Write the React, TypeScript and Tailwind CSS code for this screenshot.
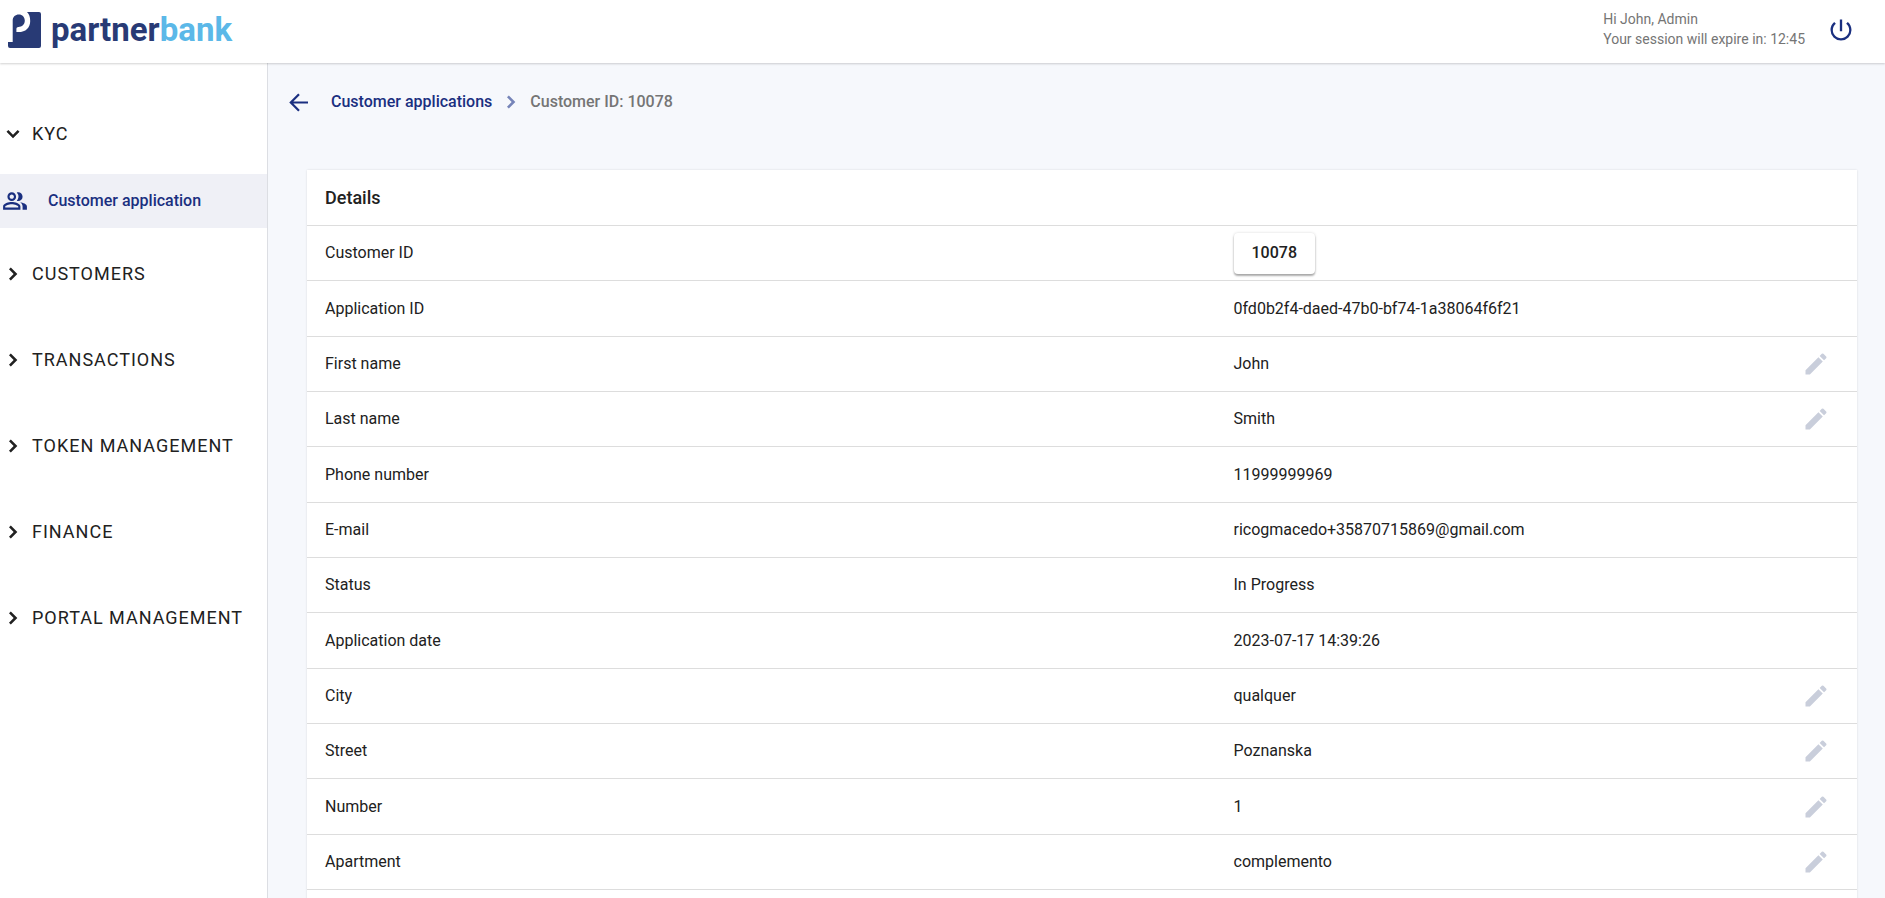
import { useState } from "react";

interface DetailRow {
  label: string;
  value: string;
  editable?: boolean;
  linked?: boolean;
}

const DETAILS: DetailRow[] = [
  { label: "Customer ID", value: "10078", linked: true },
  { label: "Application ID", value: "0fd0b2f4-daed-47b0-bf74-1a38064f6f21" },
  { label: "First name", value: "John", editable: true },
  { label: "Last name", value: "Smith", editable: true },
  { label: "Phone number", value: "11999999969" },
  { label: "E-mail", value: "ricogmacedo+35870715869@gmail.com" },
  { label: "Status", value: "In Progress" },
  { label: "Application date", value: "2023-07-17 14:39:26" },
  { label: "City", value: "qualquer", editable: true },
  { label: "Street", value: "Poznanska", editable: true },
  { label: "Number", value: "1", editable: true },
  { label: "Apartment", value: "complemento", editable: true },
];

const SECTIONS = ["KYC", "CUSTOMERS", "TRANSACTIONS", "TOKEN MANAGEMENT", "FINANCE", "PORTAL MANAGEMENT"];

export default function App() {
  return (
    <div className="flex h-screen flex-col overflow-hidden bg-white font-['Roboto',sans-serif] text-base text-[#212121]">
      <Header />
      <div className="flex min-h-0 flex-1">
        <Sidebar />
        <main className="min-w-0 flex-1 overflow-hidden bg-[#f6f8fc] pr-7 pl-[39px]">
          <Breadcrumbs />
          <DetailsCard />
        </main>
      </div>
    </div>
  );
}

function Header() {
  return (
    <header className="z-10 flex h-[63px] shrink-0 items-center justify-between bg-white pr-[30px] pb-1 pl-2 shadow-[0_1px_2px_rgba(0,0,0,0.18)]">
      <a href="#" aria-label="partnerbank" className="flex items-center gap-[10px]">
        <LogoMark className="h-9 w-[33px]" />
        <span className="text-[33px] leading-10 font-bold text-[#283a75]">
          partner<span className="text-[#5bb8e8]">bank</span>
        </span>
      </a>

      <div className="flex items-center gap-[22px]">
        <div className="pb-[2px] text-sm leading-5 text-[#757575]">
          <p>Hi John, Admin</p>
          <p>Your session will expire in: 12:45</p>
        </div>
        <button aria-label="Log out" className="text-[#1a2f80]">
          <PowerIcon className="h-7 w-7" />
        </button>
      </div>
    </header>
  );
}

function Sidebar() {
  const [open, setOpen] = useState("KYC");

  return (
    <nav className="flex w-[268px] shrink-0 flex-col gap-[5px] border-r border-[#dcdee3] pt-[30px]">
      {SECTIONS.map((name) => (
        <div key={name}>
          <button
            onClick={() => setOpen(open === name ? "" : name)}
            className="flex h-[81px] w-full items-center text-left text-lg tracking-[1px]"
          >
            <ChevronIcon className={open === name ? "h-[26px] w-[26px] rotate-90" : "h-[26px] w-[26px]"} />
            <span className="pl-[6px]">{name}</span>
          </button>
          {name === "KYC" && open === "KYC" && (
            <a
              href="#"
              className="flex h-[54px] items-center gap-5 bg-[#eff0f6] pl-[2px] font-medium text-[#1a2f80]"
            >
              <PeopleIcon className="h-[26px] w-[26px]" />
              Customer application
            </a>
          )}
        </div>
      ))}
    </nav>
  );
}

function Breadcrumbs() {
  return (
    <div className="-ml-5 flex h-[107px] items-center pb-[29px] font-medium">
      <button aria-label="Back" className="mr-5 text-[#1a2f80]">
        <BackIcon className="h-6 w-6" />
      </button>
      <a href="#" className="text-[#1a2f80]">
        Customer applications
      </a>
      <ChevronIcon className="mx-[6px] h-[26px] w-[26px] text-[#7684b8]" />
      <span className="text-[#757575]">Customer ID: 10078</span>
    </div>
  );
}

function DetailsCard() {
  return (
    <section className="bg-white pb-14 shadow-[0_0_2px_rgba(0,0,0,0.12)]">
      <h2 className="flex h-[55px] items-center px-[18px] text-lg font-medium">Details</h2>
      <table className="w-full table-fixed">
        <tbody>
          {DETAILS.map((row) => (
            <tr key={row.label} className="h-[55px] border-y border-[#dddddd] nth-[3n+2]:h-14">
              <th scope="row" className="w-[59%] px-[18px] text-left font-normal">
                {row.label}
              </th>
              <td className="pl-3">
                {row.linked ? (
                  <button className="h-[41px] rounded bg-white px-[18px] font-medium shadow-[0_2px_2px_rgba(0,0,0,0.3),0_0_3px_rgba(0,0,0,0.15)]">
                    {row.value}
                  </button>
                ) : (
                  row.value
                )}
              </td>
              <td className="w-[55px]">
                {row.editable && (
                  <button aria-label={`Edit ${row.label}`} className="block text-[#c9cedb]">
                    <PencilIcon className="h-7 w-7" />
                  </button>
                )}
              </td>
            </tr>
          ))}
        </tbody>
      </table>
    </section>
  );
}

function LogoMark({ className }: { className?: string }) {
  return (
    <svg className={className} viewBox="0 0 33 36">
      <path
        fill="#283a75"
        d="M19 0H31a2 2 0 0 1 2 2V34a2 2 0 0 1-2 2H2a2 2 0 0 1-2-2V30H4.7V8.5C4.7 4.5 7.5 2.4 10.8 2.4c3.6 0 6 2.6 6 6.2 0 4-2.8 6.4-6.4 6.4-1.2 0-2 .8-2 2v3c8.6.8 13.8-3.6 13.8-11 0-4-1-6.8-3.2-9z"
      />
    </svg>
  );
}

function ChevronIcon({ className }: { className?: string }) {
  return (
    <svg className={className} fill="currentColor" viewBox="0 0 24 24">
      <path d="M10 6 8.3 7.7l4.3 4.3-4.3 4.3L10 18l6-6z" />
    </svg>
  );
}

function BackIcon({ className }: { className?: string }) {
  return (
    <svg className={className} fill="none" stroke="currentColor" viewBox="0 0 24 24">
      <path strokeWidth={2.2} d="M21 12.5H4.500M12 4.200 3.800 12.500l8.200 8.300" />
    </svg>
  );
}

function PowerIcon({ className }: { className?: string }) {
  return (
    <svg className={className} fill="currentColor" viewBox="0 0 24 24">
      <path d="M13 3h-2v10h2V3zm4.83 2.17-1.42 1.42A6.92 6.92 0 0 1 19 12c0 3.87-3.13 7-7 7s-7-3.13-7-7c0-2.19 1.01-4.14 2.58-5.42L6.17 5.17A8.93 8.93 0 0 0 3 12a9 9 0 0 0 18 0c0-2.74-1.23-5.18-3.17-6.83z" />
    </svg>
  );
}

function PencilIcon({ className }: { className?: string }) {
  return (
    <svg className={className} fill="currentColor" viewBox="0 0 24 24">
      <path d="M3 17.25V21h3.75L17.81 9.94l-3.75-3.75L3 17.25zM20.71 7.04a.996.996 0 0 0 0-1.41l-2.34-2.34a.996.996 0 0 0-1.41 0l-1.83 1.83 3.75 3.75 1.83-1.83z" />
    </svg>
  );
}

function PeopleIcon({ className }: { className?: string }) {
  return (
    <svg className={className} fill="currentColor" viewBox="0 0 24 24">
      <path d="M16.67 13.13C18.04 14.06 19 15.32 19 17v3h4v-3c0-2.18-3.57-3.47-6.33-3.87zM15 12c2.21 0 4-1.79 4-4s-1.79-4-4-4c-.47 0-.91.1-1.33.24a5.98 5.98 0 0 1 0 7.52c.42.14.86.24 1.33.24zM9 12c2.21 0 4-1.79 4-4s-1.79-4-4-4-4 1.79-4 4 1.79 4 4 4zm0-6c1.1 0 2 .9 2 2s-.9 2-2 2-2-.9-2-2 .9-2 2-2zM9 13c-2.67 0-8 1.34-8 4v3h16v-3c0-2.66-5.33-4-8-4zm6 5H3v-.99C3.2 16.29 6.3 15 9 15s5.8 1.29 6 2v1z" />
    </svg>
  );
}
